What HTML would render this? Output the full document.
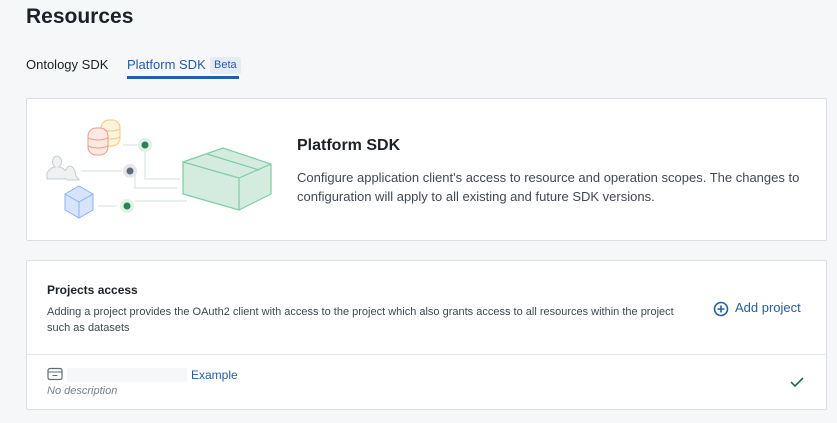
<!DOCTYPE html>
<html><head><style>
body{margin:0;width:837px;height:423px;background:#f6f7f9;font-family:"Liberation Sans",sans-serif;color:#1c2127;position:relative;overflow:hidden}
.a{position:absolute}
h1{position:absolute;left:26px;top:5px;margin:0;font-size:21px;font-weight:bold;color:#1c2127}
.card{position:absolute;left:26px;width:799px;background:#fff;border:1px solid #dcdee2;border-radius:2px}
</style></head><body>
<h1>Resources</h1>
<div class="a" style="left:26px;top:57px;font-size:13px">Ontology SDK</div>
<div class="a" style="left:127px;top:57px;font-size:13px;color:#215db0">Platform SDK</div>
<div class="a" style="left:210px;top:57px;font-size:11px;line-height:15px;color:#215db0;background:#e5ebf5;padding:1px 4px;border-radius:2px">Beta</div>
<div class="a" style="left:127px;top:76px;width:112px;height:3px;background:#215db0"></div>

<div class="card" style="top:98px;height:141px">
<svg class="a" style="left:0;top:0" width="260" height="140" viewBox="30 100 260 140">
 <g fill="none" stroke="#e1ece6" stroke-width="1.5">
  <path d="M126 146H140M148 152V180H183"/><path d="M84 172H125M138 172V189H180"/><path d="M101 207H120M138 202H190"/>
 </g>
 <circle cx="148" cy="146" r="7" fill="#e3efe7"/><circle cx="148" cy="146" r="3.5" fill="#238551"/>
 <circle cx="133" cy="172" r="7" fill="#e5e7ea"/><circle cx="133" cy="172" r="3.5" fill="#5f6b7c"/>
 <circle cx="130" cy="207" r="7" fill="#e3efe7"/><circle cx="130" cy="207" r="3.5" fill="#238551"/>
 <g stroke="#f5c971" fill="#fdf4de" stroke-width="1"><rect x="104" y="121" width="19" height="26" rx="8"/><path d="M104 130q10 4 19 0M104 138q10 4 19 0" fill="none"/></g>
 <g stroke="#f29b85" fill="#fde8e2" stroke-width="1"><rect x="91" y="129" width="20" height="27" rx="8"/><path d="M91 139q10 4 20 0M91 147q10 4 20 0" fill="none"/></g>
 <path d="M50 180v-6q4-6 8-6q-4-4-2-8q4-6 8 0q2 4-2 8q4 0 8 6v6z" fill="#f0f1f3" stroke="#c5cbd3"/>
 <path d="M68 172q5-10 10 0q0 6 4 8v1H70" fill="#f0f1f3" stroke="#c5cbd3"/>
 <path d="M82 187l14 8v16l-14 8l-14-8v-16z" fill="#d7e4fb" stroke="#8ab1f7"/>
 <path d="M68 195l14 8l14-8M82 203v16" fill="none" stroke="#8ab1f7"/>
 <path d="M186 163l40-14l48 16v30l-32 16l-56-16z" fill="#d4ece0" stroke="#7fcca2" stroke-width="1.2"/>
 <path d="M186 163l56 16l32-14M242 179v32M210 155l52 16" fill="none" stroke="#7fcca2" stroke-width="1.2"/>
</svg>
<div class="a" style="left:270px;top:38px;font-size:16px;font-weight:bold">Platform SDK</div>
<div class="a" style="left:270px;top:69px;width:520px;font-size:13px;line-height:19px;color:#404854">Configure application client's access to resource and operation scopes. The changes to configuration will apply to all existing and future SDK versions.</div>
</div>

<div class="card" style="top:260px;height:148px">
<div class="a" style="left:20px;top:22px;font-size:12px;font-weight:bold">Projects access</div>
<div class="a" style="left:20px;top:43px;width:650px;font-size:11px;line-height:16px;color:#404854">Adding a project provides the OAuth2 client with access to the project which also grants access to all resources within the project such as datasets</div>
<svg class="a" style="left:686px;top:40px" width="16" height="16"><circle cx="8" cy="8" r="6.5" fill="none" stroke="#215db0" stroke-width="1.6"/><path d="M8 4.5v7M4.5 8h7" stroke="#215db0" stroke-width="1.6"/></svg>
<div class="a" style="left:708px;top:39px;font-size:13px;color:#215db0">Add project</div>
<div class="a" style="left:0;top:93px;width:799px;height:1px;background:#e5e7ea"></div>
<svg class="a" style="left:20px;top:106px" width="16" height="14"><rect x="1" y="1.5" width="14" height="11" rx="2" fill="none" stroke="#5f6b7c" stroke-width="1.2"/><path d="M1 5h14M5.5 8.5h5" stroke="#5f6b7c" stroke-width="1.1"/></svg>
<div class="a" style="left:40px;top:107px;width:120px;height:14px;background:#f6f7f9"></div>
<div class="a" style="left:164px;top:107px;font-size:12px;color:#215db0">Example</div>
<div class="a" style="left:20px;top:124px;font-size:11px;font-style:italic;color:#738091">No description</div>
<svg class="a" style="left:762px;top:115px" width="16" height="12"><path d="M2 6l4 4l8-8" fill="none" stroke="#1c6e42" stroke-width="1.6"/></svg>
</div>
</body></html>
